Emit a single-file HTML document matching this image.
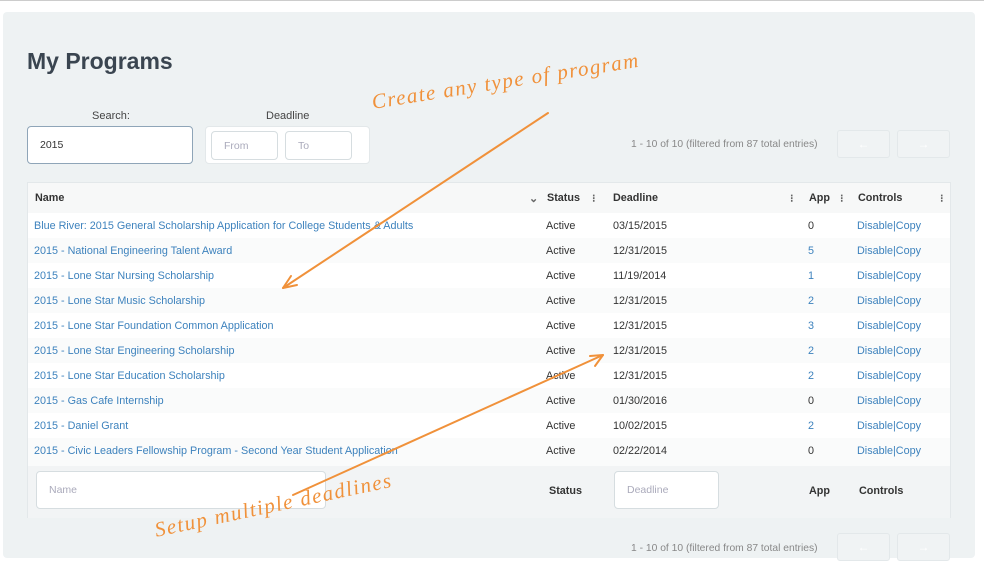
<!DOCTYPE html>
<html><head><style>
*{margin:0;padding:0;box-sizing:border-box}
body{width:984px;height:567px;background:#fff;font-family:"Liberation Sans",sans-serif;position:relative;overflow:hidden;color:#333}
.top{position:absolute;left:0;top:0;width:984px;height:1px;background:#ccc}
.panel{position:absolute;left:3px;top:12px;width:972px;height:546px;background:#eef2f3;border-radius:4px}
.a{position:absolute;white-space:nowrap}
h1{position:absolute;left:27px;top:48px;font-size:23px;font-weight:bold;color:#3a4550}
.inp{position:absolute;background:#fff;border:1px solid #d6dde0;border-radius:4px;font-size:10.5px;color:#aab;padding-left:12px;display:flex;align-items:center}
.tbl{position:absolute;left:27px;top:182px;width:924px;height:336px;background:#fafbfb;border:1px solid #e3e8ea}
.row{position:absolute;left:0;width:922px;height:25px;font-size:10.8px}
.row span{position:absolute;top:7px}
.l{color:#3d82bd}
.hd{font-weight:bold;font-size:10.8px;color:#333}
.btn{position:absolute;width:53px;height:28px;border:1px solid #e3e8ea;border-radius:3px;background:#f0f3f4;color:#fff;font-size:12px;text-align:center;line-height:26px}
.hw{position:absolute;color:#f0913a;font-family:"Liberation Serif",serif;font-style:italic;font-size:21px;white-space:nowrap;letter-spacing:1.5px}
</style></head><body>
<div class="top"></div>
<div class="panel"></div>
<h1>My Programs</h1>
<div class="a" style="left:92px;top:110px;font-size:11px;color:#444">Search:</div>
<div class="a" style="left:266px;top:110px;font-size:11px;color:#444">Deadline</div>
<div class="inp" style="left:27px;top:126px;width:166px;height:38px;border-color:#8fa5b8;color:#333">2015</div>
<div class="inp" style="left:205px;top:126px;width:165px;height:38px;border-color:#e3e8ea"></div>
<div class="inp" style="left:211px;top:131px;width:67px;height:29px">From</div>
<div class="inp" style="left:285px;top:131px;width:67px;height:29px">To</div>
<div class="a" style="left:631px;top:139px;font-size:10.3px;color:#888">1 - 10 of 10 (filtered from 87 total entries)</div>
<div class="btn" style="left:837px;top:130px">←</div>
<div class="btn" style="left:897px;top:130px">→</div>
<div class="tbl">
<div class="row hd" style="top:0;height:30px;background:#f7f8f8"><span style="left:7px;top:9px">Name</span><span style="left:501px;top:9px;color:#666">⌄</span><span style="left:519px;top:9px">Status</span><span style="left:564px;top:9px;color:#666">⁝</span><span style="left:585px;top:9px">Deadline</span><span style="left:762px;top:9px;color:#666">⁝</span><span style="left:781px;top:9px">App</span><span style="left:812px;top:9px;color:#666">⁝</span><span style="left:830px;top:9px">Controls</span><span style="left:912px;top:9px;color:#666">⁝</span></div>
<div class="row" style="top:30px;background:#fff"><span class="l" style="left:6px">Blue River: 2015 General Scholarship Application for College Students &amp; Adults</span><span style="left:518px">Active</span><span style="left:585px">03/15/2015</span><span style="left:780px">0</span><span class="l" style="left:829px">Disable|Copy</span></div>
<div class="row" style="top:55px"><span class="l" style="left:6px">2015 - National Engineering Talent Award</span><span style="left:518px">Active</span><span style="left:585px">12/31/2015</span><span class="l" style="left:780px">5</span><span class="l" style="left:829px">Disable|Copy</span></div>
<div class="row" style="top:80px;background:#fff"><span class="l" style="left:6px">2015 - Lone Star Nursing Scholarship</span><span style="left:518px">Active</span><span style="left:585px">11/19/2014</span><span class="l" style="left:780px">1</span><span class="l" style="left:829px">Disable|Copy</span></div>
<div class="row" style="top:105px"><span class="l" style="left:6px">2015 - Lone Star Music Scholarship</span><span style="left:518px">Active</span><span style="left:585px">12/31/2015</span><span class="l" style="left:780px">2</span><span class="l" style="left:829px">Disable|Copy</span></div>
<div class="row" style="top:130px;background:#fff"><span class="l" style="left:6px">2015 - Lone Star Foundation Common Application</span><span style="left:518px">Active</span><span style="left:585px">12/31/2015</span><span class="l" style="left:780px">3</span><span class="l" style="left:829px">Disable|Copy</span></div>
<div class="row" style="top:155px"><span class="l" style="left:6px">2015 - Lone Star Engineering Scholarship</span><span style="left:518px">Active</span><span style="left:585px">12/31/2015</span><span class="l" style="left:780px">2</span><span class="l" style="left:829px">Disable|Copy</span></div>
<div class="row" style="top:180px;background:#fff"><span class="l" style="left:6px">2015 - Lone Star Education Scholarship</span><span style="left:518px">Active</span><span style="left:585px">12/31/2015</span><span class="l" style="left:780px">2</span><span class="l" style="left:829px">Disable|Copy</span></div>
<div class="row" style="top:205px"><span class="l" style="left:6px">2015 - Gas Cafe Internship</span><span style="left:518px">Active</span><span style="left:585px">01/30/2016</span><span style="left:780px">0</span><span class="l" style="left:829px">Disable|Copy</span></div>
<div class="row" style="top:230px;background:#fff"><span class="l" style="left:6px">2015 - Daniel Grant</span><span style="left:518px">Active</span><span style="left:585px">10/02/2015</span><span class="l" style="left:780px">2</span><span class="l" style="left:829px">Disable|Copy</span></div>
<div class="row" style="top:255px"><span class="l" style="left:6px">2015 - Civic Leaders Fellowship Program - Second Year Student Application</span><span style="left:518px">Active</span><span style="left:585px">02/22/2014</span><span style="left:780px">0</span><span class="l" style="left:829px">Disable|Copy</span></div>
<div class="row hd" style="top:283px;height:52px;background:#f2f4f5"><span style="left:521px;top:19px">Status</span><span style="left:781px;top:19px">App</span><span style="left:831px;top:19px">Controls</span></div>
</div>
<div class="inp" style="left:36px;top:471px;width:290px;height:38px">Name</div>
<div class="inp" style="left:614px;top:471px;width:105px;height:38px">Deadline</div>
<div class="a" style="left:631px;top:543px;font-size:10.3px;color:#888">1 - 10 of 10 (filtered from 87 total entries)</div>
<div class="btn" style="left:837px;top:533px">←</div>
<div class="btn" style="left:897px;top:533px">→</div>
<svg style="position:absolute;left:0;top:0" width="984" height="567">
<g stroke="#f0913a" stroke-width="2" fill="none" stroke-linecap="round">
<path d="M548 113 L283 288"/><path d="M283 288 L291 276 M283 288 L297 285"/>
<path d="M293 495 L603 355"/><path d="M603 355 L590 356 M603 355 L595 366"/>
</g></svg>
<div class="hw" style="left:372px;top:90px;transform:rotate(-9deg);transform-origin:left center">Create any type of program</div>
<div class="hw" style="left:155px;top:518px;transform:rotate(-12deg);transform-origin:left center">Setup multiple deadlines</div>
</body></html>
